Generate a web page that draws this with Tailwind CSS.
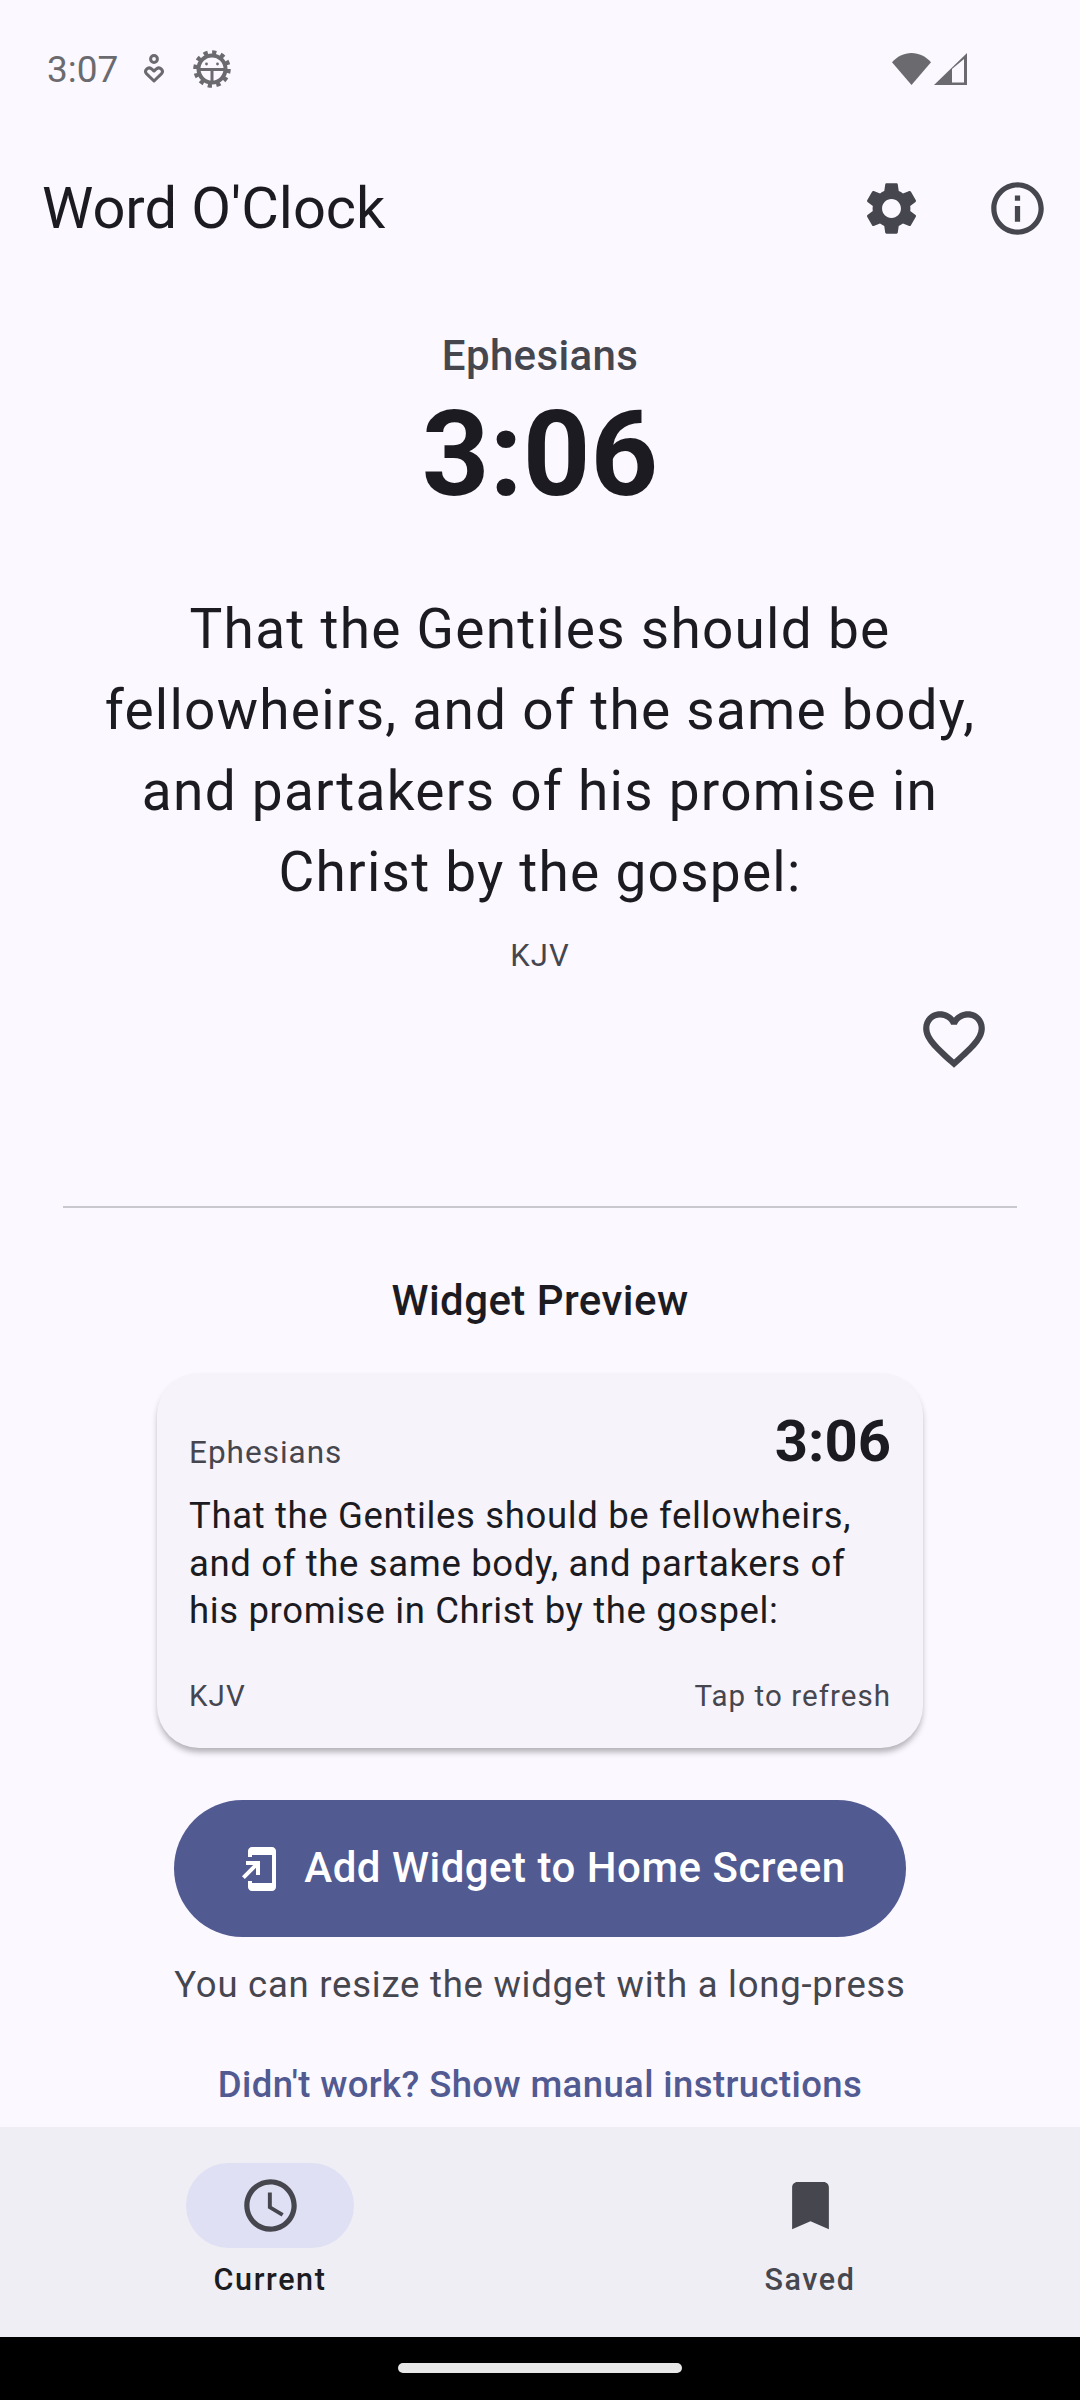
<!DOCTYPE html>
<html lang="en">
<head>
  <meta charset="UTF-8">
  <meta name="viewport" content="width=device-width, initial-scale=1.0">
  <title>Word O'Clock</title>
  <script src="https://cdn.jsdelivr.net/npm/@tailwindcss/browser@4"></script>
</head>
<body class="bg-[#fbf8ff] font-['Roboto',sans-serif]">
  <div class="w-[1080px] h-[2400px] flex flex-col overflow-hidden">

    <!-- status bar -->
    <div class="h-[138px] shrink-0 flex items-center pl-[47px] pr-[113px] text-[#6b6b6f]">
      <span class="text-[37px] leading-none">3:07</span>
      <svg class="w-[22px] h-[30px] ml-[25px]" viewBox="0 0 22 30" fill="none" stroke="#6b6b6f" stroke-width="3"><circle cx="11" cy="5" r="3.4"/><path d="M11 27 3.4 19.6c-2.6-3 1.6-7.4 4.9-4.9L11 17l2.7-2.3c3.3-2.5 7.5 1.9 4.9 4.9z" stroke-linejoin="round"/></svg>
      <svg class="w-[38px] h-[38px] ml-[28px]" viewBox="0 0 38 38" fill="none" stroke="#6b6b6f"><circle cx="19" cy="19" r="13.5" stroke-width="4"/><circle cx="19" cy="19" r="16.5" stroke-width="4.5" stroke-dasharray="4.2 4.4"/><path d="M6 19.5h26M19 19.5v13" stroke-width="3"/><circle cx="13.5" cy="14" r="1.4" fill="#6b6b6f" stroke="none"/><circle cx="24.5" cy="14" r="1.4" fill="#6b6b6f" stroke="none"/></svg>
      <div class="flex-1"></div>
      <svg class="w-[39px] h-[32px]" viewBox="0 0 39 32" fill="#6b6b6f"><path d="M19.5 32 0 9.2C5 3.6 12 0 19.5 0S34 3.6 39 9.2z"/></svg>
      <svg class="w-[33px] h-[32px] ml-[3px]" viewBox="0 0 33 32"><path d="M33 0v32H0z" fill="#6b6b6f"/><path d="M18 29.500V16L30 6v23.500z" fill="#fbf8ff"/></svg>
    </div>

    <!-- app bar -->
    <div class="h-[138px] shrink-0 flex items-center pl-[42px] text-[#1b1b21]">
      <h1 class="text-[57.8px] leading-none mt-[3px]">Word O'Clock</h1>
      <div class="flex-1"></div>
      <svg class="w-[63px] h-[63px] mt-[3px]" viewBox="0 0 24 24" fill="#46464f"><path d="M19.14 12.94c.04-.3.06-.61.06-.94 0-.32-.02-.64-.07-.94l2.03-1.58c.18-.14.23-.41.12-.61l-1.92-3.32c-.12-.22-.37-.29-.59-.22l-2.39.96c-.5-.38-1.03-.7-1.62-.94l-.36-2.54c-.04-.24-.24-.41-.48-.41h-3.84c-.24 0-.43.17-.47.41l-.36 2.54c-.59.24-1.13.57-1.62.94l-2.39-.96c-.22-.08-.47 0-.59.22L2.74 8.87c-.12.21-.08.47.12.61l2.03 1.58c-.05.3-.09.63-.09.94s.02.64.07.94l-2.03 1.58c-.18.14-.23.41-.12.61l1.92 3.32c.12.22.37.29.59.22l2.39-.96c.5.38 1.03.7 1.62.94l.36 2.54c.05.24.24.41.48.41h3.84c.24 0 .44-.17.47-.41l.36-2.54c.59-.24 1.13-.56 1.62-.94l2.39.96c.22.08.47 0 .59-.22l1.92-3.32c.12-.22.07-.47-.12-.61l-2.01-1.58zM12 15.6c-1.98 0-3.6-1.62-3.6-3.6s1.62-3.6 3.6-3.6 3.6 1.62 3.6 3.6-1.62 3.6-3.6 3.6z"/></svg>
      <svg class="w-[63px] h-[63px] ml-[63px] mr-[31px] mt-[3px]" viewBox="0 0 24 24" fill="#46464f"><path d="M11 7h2v2h-2zm0 4h2v6h-2zm1-9C6.48 2 2 6.48 2 12s4.48 10 10 10 10-4.48 10-10S17.52 2 12 2zm0 18c-4.41 0-8-3.59-8-8s3.59-8 8-8 8 3.59 8 8-3.59 8-8 8z"/></svg>
    </div>

    <!-- current verse -->
    <main class="flex-1 flex flex-col items-center text-center">
      <div class="mt-[55px] text-[42px] leading-[50px] tracking-[0.35px] font-medium text-[#46464f]">Ephesians</div>
      <div class="mt-[11px] text-[118px] leading-[126px] font-bold text-[#1b1b21]">3:06</div>
      <p class="mt-[71px] w-[900px] text-[55px] leading-[81px] tracking-[1.25px] text-[#1b1b21]">That the Gentiles should be fellowheirs, and of the same body, and partakers of his promise in Christ by the gospel:</p>
      <div class="mt-[23px] text-[31px] leading-[40px] tracking-[1px] text-[#46464f]">KJV</div>
      <div class="w-full flex justify-end pr-[89px] mt-[26px]">
        <svg class="w-[74px] h-[74px]" viewBox="0 0 24 24" fill="#46464f"><path d="M16.5 3c-1.74 0-3.41.81-4.5 2.09C10.91 3.81 9.24 3 7.5 3 4.42 3 2 5.42 2 8.5c0 3.78 3.4 6.86 8.55 11.54L12 21.35l1.45-1.32C18.6 15.36 22 12.28 22 8.5 22 5.42 19.58 3 16.5 3zm-4.4 15.55l-.1.1-.1-.1C7.14 14.24 4 11.39 4 8.5 4 6.5 5.5 5 7.5 5c1.54 0 3.04.99 3.57 2.36h1.87C13.46 5.99 14.96 5 16.5 5c2 0 3.5 1.5 3.5 3.5 0 2.89-3.14 5.74-7.9 10.05z"/></svg>
      </div>
      <div class="mt-[130px] w-[954px] h-[2px] bg-[#c8c8ce]"></div>
      <h2 class="mt-[68px] text-[42px] leading-[50px] tracking-[0.45px] font-medium text-[#1b1b21]">Widget Preview</h2>

      <!-- widget card -->
      <div class="mt-[47px] w-[766px] h-[375px] rounded-[42px] bg-[#f6f3fb] px-[32px] pt-[34px] flex flex-col text-left shadow-[0_5px_6px_-1px_rgba(0,0,0,0.3)]">
        <div class="flex items-end justify-between">
          <span class="text-[31.5px] leading-[40px] tracking-[1px] text-[#46464f] mb-[2px]">Ephesians</span>
          <span class="text-[58px] leading-[68px] font-bold text-[#1b1b21]">3:06</span>
        </div>
        <p class="mt-[17px] text-[36.5px] leading-[47.5px] tracking-[0.65px] text-[#1b1b21]">That the Gentiles should be fellowheirs, and of the same body, and partakers of his promise in Christ by the gospel:</p>
        <div class="mt-[41px] flex justify-between text-[29.5px] leading-[40px] tracking-[1.05px] text-[#46464f]">
          <span>KJV</span>
          <span>Tap to refresh</span>
        </div>
      </div>

      <button class="mt-[52px] w-[732px] h-[137px] rounded-full bg-[#525a92] text-white flex items-center justify-center text-[42px] tracking-[0.5px] font-medium">
        <svg class="w-[48px] h-[48px] mr-[20px] ml-[2px]" viewBox="0 0 24 24" fill="#fff"><path d="M18 1.01 8 1c-1.1 0-2 .9-2 2v3h2V5h10v14H8v-1H6v3c0 1.1.9 2 2 2h10c1.1 0 2-.9 2-2V3c0-1.1-.9-1.99-2-1.99zM10 15h2V8H5v2h3.59L3 15.59 4.41 17 10 11.41z"/></svg>
        <span class="-mt-[2px]">Add Widget to Home Screen</span>
      </button>
      <p class="mt-[26px] text-[36.5px] leading-[44px] tracking-[0.76px] text-[#46464f]">You can resize the widget with a long-press</p>
      <a class="mt-[56px] text-[36.5px] leading-[44px] tracking-[0.4px] font-medium text-[#525a92]">Didn't work? Show manual instructions</a>
    </main>

    <!-- bottom nav -->
    <nav class="h-[210px] shrink-0 bg-[#eeeef4] grid grid-cols-2 pt-[36px]">
      <div class="flex flex-col items-center">
        <div class="w-[168px] h-[85px] rounded-full bg-[#e0e0f5] flex items-center justify-center">
          <svg class="w-[63px] h-[63px]" viewBox="0 0 24 24" fill="#46464f"><path d="M11.99 2C6.47 2 2 6.48 2 12s4.47 10 9.99 10C17.52 22 22 17.52 22 12S17.52 2 11.99 2zM12 20c-4.42 0-8-3.58-8-8s3.58-8 8-8 8 3.58 8 8-3.58 8-8 8zM12.5 7H11v6l5.25 3.15.75-1.23-4.5-2.67z"/></svg>
        </div>
        <span class="mt-[12px] text-[30.5px] leading-[40px] tracking-[1.6px] font-medium text-[#1b1b21]">Current</span>
      </div>
      <div class="flex flex-col items-center">
        <div class="w-[168px] h-[85px] flex items-center justify-center">
          <svg class="w-[63px] h-[63px]" viewBox="0 0 24 24" fill="#46464f"><path d="M17 3H7c-1.1 0-2 .9-2 2v16l7-3 7 3V5c0-1.1-.9-2-2-2z"/></svg>
        </div>
        <span class="mt-[12px] text-[30.5px] leading-[40px] tracking-[1.6px] font-medium text-[#46464f]">Saved</span>
      </div>
    </nav>

    <!-- gesture bar -->
    <div class="h-[63px] shrink-0 bg-black flex justify-center pt-[26px]">
      <div class="w-[284px] h-[10px] rounded-full bg-[#e8e8e8]"></div>
    </div>
  </div>
</body>
</html>
